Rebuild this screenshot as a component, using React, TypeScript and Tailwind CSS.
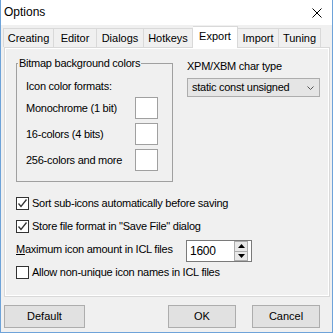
import React from 'react';

const tabs = [
  { label: 'Creating', w: 'w-[51px]', first: true },
  { label: 'Editor', w: 'w-[43px]' },
  { label: 'Dialogs', w: 'w-[47px]' },
  { label: 'Hotkeys', w: 'w-[49px]' },
  { label: 'Export', w: 'w-[45px]', active: true },
  { label: 'Import', w: 'w-[41px]' },
  { label: 'Tuning', w: 'w-[42px]' },
];

const Checkbox: React.FC<{ checked?: boolean }> = ({ checked }) => (
  <div className="w-[13px] h-[13px] border border-[#333333] bg-white flex items-center justify-center shrink-0">
    {checked && (
      <svg width="11" height="11" viewBox="0 0 11 11">
        <polyline points="1.5,5.5 4,8.5 9.5,1.5" fill="none" stroke="#333333" strokeWidth="1.3" />
      </svg>
    )}
  </div>
);

const ColorRow: React.FC<{ label: string }> = ({ label }) => (
  <div className="flex items-center justify-between">
    <span>{label}</span>
    <div className="w-[23px] h-[22px] bg-white border border-[#a0a0a0]" />
  </div>
);

const Button: React.FC<{ label: string; className?: string }> = ({ label, className }) => (
  <div className={`h-[23px] bg-[#e1e1e1] border border-[#adadad] flex items-center justify-center ${className ?? ''}`}>
    {label}
  </div>
);

export default function App() {
  return (
    <div
      className="w-[333px] h-[333px] bg-[#f0f0f0] border-x border-b border-[#6ea3d9] flex flex-col text-[11px] leading-[13px] text-black"
      style={{ fontFamily: '"Liberation Sans", Arial, sans-serif' }}
    >
      {/* title bar */}
      <div className="h-[25px] bg-white flex items-center justify-between pl-[3px] pr-[10px] shrink-0">
        <span className="text-[12px]">Options</span>
        <svg width="10" height="10" viewBox="0 0 10 10">
          <path d="M0.5 0.5 L9.5 9.5 M9.5 0.5 L0.5 9.5" stroke="#000" strokeWidth="1" />
        </svg>
      </div>

      {/* tabs */}
      <div className="flex items-end pl-[2px] mt-[1px] h-[21px] relative z-10">
        {tabs.map((t) =>
          t.active ? (
            <div
              key={t.label}
              className={`${t.w} h-[22px] -mb-[1px] bg-white border-t border-r border-[#d9d9d9] flex items-center justify-center pb-[2px]`}
            >
              {t.label}
            </div>
          ) : (
            <div
              key={t.label}
              className={`${t.w} h-[19px] bg-[#f0f0f0] border-t border-r ${t.first ? 'border-l' : ''} border-[#d9d9d9] flex items-center justify-center`}
            >
              {t.label}
            </div>
          )
        )}
      </div>

      {/* page */}
      <div className="ml-[3px] w-[326px] h-[250px] border border-[#d9d9d9] shadow-[inset_1px_1px_0_#ffffff,inset_-1px_-1px_0_#ffffff] pt-[9px] pl-[11px] shrink-0 tracking-[-0.25px]">
        <div className="flex">
          <fieldset className="w-[157px] h-[125px] border border-[#a0a0a0] pl-[9px] pr-[14px]">
            <legend className="ml-[-8px] px-[1px]">Bitmap background colors</legend>
            <div className="mt-[10px]">Icon color formats:</div>
            <div className="mt-[4px] flex flex-col gap-[4px]">
              <ColorRow label="Monochrome (1 bit)" />
              <ColorRow label="16-colors (4 bits)" />
              <ColorRow label="256-colors and more" />
            </div>
          </fieldset>

          <div className="ml-[14px] mt-[3px]">
            <div>XPM/XBM char type</div>
            <div className="mt-[5px] w-[133px] h-[19px] bg-[#e5e5e5] border border-[#adadad] flex items-center justify-between pl-[4px] pr-[5px]">
              <span>static const unsigned</span>
              <svg width="7" height="4" viewBox="0 0 7 4">
                <polyline points="0.5,0.5 3.5,3.5 6.5,0.5" fill="none" stroke="#555" strokeWidth="1" />
              </svg>
            </div>
          </div>
        </div>

        <div className="mt-[15px] flex items-center gap-[3px]">
          <Checkbox checked />
          <span>Sort sub-icons automatically before saving</span>
        </div>
        <div className="mt-[10px] flex items-center gap-[3px]">
          <Checkbox checked />
          <span>Store file format in "Save File" dialog</span>
        </div>
        <div className="mt-[7px] flex items-center">
          <span className="w-[170px] -mt-[3px]">
            <span className="underline">M</span>aximum icon amount in ICL files
          </span>
          <div className="w-[66px] h-[22px] bg-white border border-[#7a7a7a] flex items-center justify-between pl-[3px] pr-[3px]">
            <span className="text-[12px]">1600</span>
            <div className="w-[14px] h-[20px] flex flex-col">
              <div className="flex-1 bg-[#e8e8e8] border border-[#adadad] flex items-center justify-center">
                <svg width="7" height="4" viewBox="0 0 7 4"><polygon points="0,4 3.5,0 7,4" fill="#000" /></svg>
              </div>
              <div className="flex-1 bg-[#e8e8e8] border-x border-b border-[#adadad] flex items-center justify-center">
                <svg width="7" height="4" viewBox="0 0 7 4"><polygon points="0,0 3.5,4 7,0" fill="#000" /></svg>
              </div>
            </div>
          </div>
        </div>
        <div className="mt-[4px] flex items-center gap-[3px]">
          <Checkbox />
          <span>Allow non-unique icon names in ICL files</span>
        </div>
      </div>

      {/* buttons */}
      <div className="mt-[8px] flex pl-[3px]">
        <Button label="Default" className="w-[81px]" />
        <Button label="OK" className="w-[68px] ml-[83px]" />
        <Button label="Cancel" className="w-[68px] ml-[16px]" />
      </div>
    </div>
  );
}
